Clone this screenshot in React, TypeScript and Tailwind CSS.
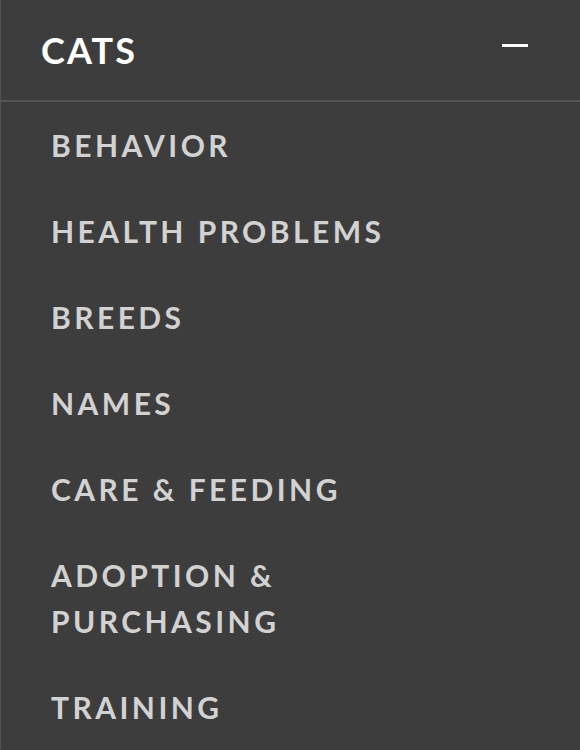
import { useState } from 'react';

const items = [
  'Behavior',
  'Health Problems',
  'Breeds',
  'Names',
  'Care & Feeding',
  'Adoption & Purchasing',
  'Training',
];

function App() {
  const [open, setOpen] = useState(true);

  return (
    <div className="min-h-screen w-[580px] bg-[#3d3d3d] border-l border-[#555555] font-['Lato',_'Open_Sans',_sans-serif]">
      <button
        onClick={() => setOpen(!open)}
        className="flex w-full h-[102px] items-center justify-between pl-[40px] pr-[52px] border-b-2 border-[#555555] text-white"
      >
        <span className="uppercase text-[36px] font-bold tracking-[0.06em] leading-none">Cats</span>
        <span className="block w-[26px] h-[3px] bg-white mb-[10px]" />
      </button>
      {open && (
        <ul className="pl-[50px] pr-[40px]">
          {items.map((item) => (
            <li key={item} className="py-[20px]">
              <a className="block max-w-[345px] uppercase text-[30px] leading-[46px] font-bold tracking-[0.115em] text-[#d2d2d2]">
                {item}
              </a>
            </li>
          ))}
        </ul>
      )}
    </div>
  );
}

export default App;
